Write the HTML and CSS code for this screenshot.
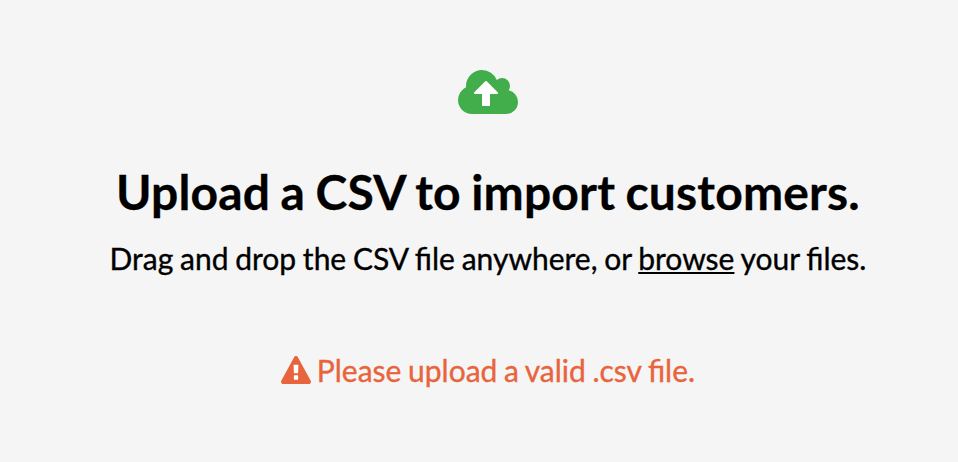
FILE: index.html
```html
<!DOCTYPE html>
<html lang="en">
<head>
<meta charset="utf-8">
<title>Import customers</title>
<link rel="stylesheet" href="styles.css">
</head>
<body>
<main class="upload">
<svg class="cloud" viewBox="0 0 1920 1408" aria-hidden="true"><path class="arrow" d="M480 300h850v900H480z"/><path d="M1280 736q0-14-9-23L919 361q-9-9-23-9t-23 9L522 712q-10 12-10 24 0 14 9 23t23 9h224v352q0 13 9.500 22.500t22.500 9.500h192q13 0 22.500-9.500t9.500-22.500V768h224q13 0 22.500-9.500t9.500-22.500zm640 288q0 159-112.500 271.500T1536 1408H448q-185 0-316.500-131.500T0 960q0-130 70-240t188-165q-2-30-2-43 0-212 150-362T768 0q156 0 285.500 87T1242 318q71-62 166-62 106 0 181 75t75 181q0 76-41 138 130 31 213.500 135.500T1920 1024z"/></svg>
<h1 class="title">Upload a CSV to import customers.</h1>
<p class="hint">Drag and drop the CSV file anywhere, or <a class="browse" href="#">browse</a> your files.</p>
<p class="error"><svg class="warning" viewBox="0 0 1792 1664" aria-hidden="true"><path class="mark" d="M740 500h310v940H740z"/><path d="M1024 1375v-190q0-14-9.500-23.500T992 1152H800q-13 0-22.500 9.500T768 1185v190q0 14 9.500 23.500T800 1408h192q13 0 22.500-9.500t9.500-23.500zm-2-374l18-459q0-12-10-19-13-11-24-11H786q-11 0-24 11-10 7-10 21l17 457q0 10 10 16.500t24 6.500h185q14 0 23.500-6.500t10.500-16.500zm-14-934l768 1408q35 63-2 126-17 29-46.500 46t-63.500 17H128q-34 0-63.500-17T18 1601q-37-63-2-126L784 67q17-31 47-49t65-18 65 18 47 49z"/></svg><span>Please upload a valid .csv file.</span></p>
</main>
</body>
</html>
```
FILE: styles.css
```css
body { margin: 0; background: #f5f5f5; color: #000; font-family: Lato, sans-serif; }
.upload { display: flex; flex-direction: column; align-items: center; height: 392px; padding: 70px 0 0 18px; }
.cloud { width: 60px; height: 44px; fill: #41ae4b; }
.arrow, .mark { fill: #fff; }
.title { margin: 48px 0 0; font-size: 48px; line-height: 60px; font-weight: 700; letter-spacing: 0.17px; word-spacing: -1.5px; -webkit-text-stroke: 0.3px currentColor; white-space: nowrap; }
.hint { margin: 16px 0 0; font-size: 30px; line-height: 40px; word-spacing: -0.95px; -webkit-text-stroke: 0.35px currentColor; white-space: nowrap; }
.browse { color: inherit; text-decoration-thickness: 2px; text-underline-offset: 2px; text-decoration-skip-ink: none; }
.error { display: flex; align-items: center; gap: 6px; margin: 72px 0 0; font-size: 30px; line-height: 40px; word-spacing: -1.1px; -webkit-text-stroke: 0.35px currentColor; color: #e8643c; white-space: nowrap; }
.warning { width: 30px; height: 28px; fill: currentColor; }
```
